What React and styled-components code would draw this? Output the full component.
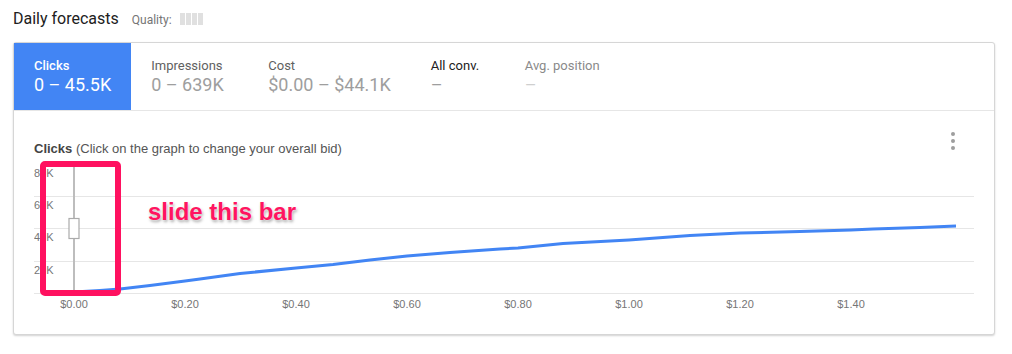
import React from "react";
import styled, { createGlobalStyle } from "styled-components";

const Global = createGlobalStyle`
  html, body { margin: 0; padding: 0; background: #fff; }
  body { font-family: Roboto, "Liberation Sans", Arial, sans-serif; }
`;

const Page = styled.div`
  width: 1012px;
  height: 354px;
  box-sizing: border-box;
  padding: 8px 17px 0 13px;
`;

const Header = styled.div`
  display: flex;
  align-items: baseline;
  height: 22px;
  margin-bottom: 12px;
`;

const Title = styled.h1`
  margin: 0;
  font-size: 16px;
  font-weight: 400;
  line-height: 22px;
  color: #212121;
`;

const QualityLabel = styled.span`
  margin-left: 13px;
  font-size: 12px;
  color: #757575;
`;

const QualityBars = styled.span`
  display: inline-flex;
  gap: 1px;
  margin-left: 8px;
  align-self: center;
`;

const QBar = styled.span`
  width: 5px;
  height: 12px;
  background: #e0e0e0;
`;

const Card = styled.div`
  border: 1px solid #d6d6d6;
  border-radius: 3px;
  box-shadow: 0 1px 2px rgba(0, 0, 0, 0.18);
  background: #fff;
`;

const Tabs = styled.div`
  display: flex;
  height: 67px;
  border-bottom: 1px solid #e6e6e6;
`;

const Tab = styled.div`
  box-sizing: border-box;
  padding: 15px 20px 0 20px;
  min-width: ${(p) => p.$min || 0}px;
  background: ${(p) => (p.$active ? "#4285f4" : "transparent")};
`;

const TabLabel = styled.div`
  font-size: 13px;
  line-height: 16px;
  font-weight: ${(p) => (p.$active ? 500 : 400)};
  color: ${(p) => p.$color};
`;

const TabValue = styled.div`
  font-size: 18px;
  line-height: 22px;
  font-weight: 400;
  color: ${(p) => p.$color};
  white-space: nowrap;
`;

const ChartSection = styled.div`
  position: relative;
  padding: 30px 20px 14px 20px;
`;

const ChartHead = styled.div`
  display: flex;
  justify-content: space-between;
  align-items: flex-start;
`;

const ChartTitle = styled.div`
  font-family: "Liberation Sans", Arial, sans-serif;
  font-size: 13px;
  line-height: 16px;
  color: #555;
  b {
    color: #444;
    font-weight: 700;
  }
`;

const Kebab = styled.div`
  display: flex;
  flex-direction: column;
  gap: 3px;
  margin-top: -9px;
  margin-right: 19px;
`;

const Dot = styled.span`
  width: 4px;
  height: 4px;
  border-radius: 50%;
  background: #9e9e9e;
`;

const ChartSvg = styled.svg`
  display: block;
  margin-top: 3px;
`;

const Highlight = styled.div`
  position: absolute;
  left: 26px;
  top: 50px;
  width: 81px;
  height: 135px;
  box-sizing: border-box;
  border: 6px solid #ff1160;
  border-radius: 5px;
`;

const Note = styled.div`
  position: absolute;
  left: 134px;
  top: 87px;
  font-family: "Liberation Sans", Arial, sans-serif;
  font-weight: 700;
  font-size: 24px;
  line-height: 28px;
  color: #ff1460;
  white-space: nowrap;
  text-shadow: 0 0 2px #fff, 1px 2px 3px rgba(0, 0, 0, 0.35);
`;

const tabs = [
  { label: "Clicks", value: "0 – 45.5K", active: true, lc: "#fff", vc: "#fff", min: 117 },
  { label: "Impressions", value: "0 – 639K", lc: "#616161", vc: "#9e9e9e", min: 117 },
  { label: "Cost", value: "$0.00 – $44.1K", lc: "#616161", vc: "#9e9e9e", min: 161 },
  { label: "All conv.", value: "–", lc: "#212121", vc: "#9e9e9e", min: 94 },
  { label: "Avg. position", value: "–", lc: "#8a8a8a", vc: "#cfcfcf" },
];

const pts = [
  [74, 292], [100, 290.5], [120, 289], [150, 285.5], [185, 281], [200, 279],
  [240, 273.5], [296, 268], [333, 264.5], [370, 260], [407, 256], [450, 252.5],
  [500, 249], [518, 248], [563, 243.5], [629, 240], [690, 235.5], [740, 233],
  [800, 231.5], [851, 230], [873, 229], [920, 227.5], [956, 226],
];

const OX = 34;
const OY = 160;

export default function App() {
  const grid = [196, 228, 261, 293];
  const yLabels = [
    ["80K", 177],
    ["60K", 209],
    ["40K", 241],
    ["20K", 273.5],
  ];
  const xLabels = ["$0.00", "$0.20", "$0.40", "$0.60", "$0.80", "$1.00", "$1.20", "$1.40"];
  const path = pts.map(([x, y], i) => `${i ? "L" : "M"}${x - OX} ${y - OY}`).join(" ");

  return (
    <>
      <Global />
      <Page>
        <Header>
          <Title>Daily forecasts</Title>
          <QualityLabel>Quality:</QualityLabel>
          <QualityBars>
            <QBar />
            <QBar />
            <QBar />
            <QBar />
          </QualityBars>
        </Header>
        <Card>
          <Tabs>
            {tabs.map((t) => (
              <Tab key={t.label} $active={t.active} $min={t.min}>
                <TabLabel $active={t.active} $color={t.lc}>{t.label}</TabLabel>
                <TabValue $color={t.vc}>{t.value}</TabValue>
              </Tab>
            ))}
          </Tabs>
          <ChartSection>
            <ChartHead>
              <ChartTitle>
                <b>Clicks</b> (Click on the graph to change your overall bid)
              </ChartTitle>
              <Kebab>
                <Dot />
                <Dot />
                <Dot />
              </Kebab>
            </ChartHead>
            <ChartSvg width="940" height="160" viewBox="0 0 940 160">
              {grid.map((y) => (
                <line key={y} x1="0" x2="940" y1={y - OY + 0.5} y2={y - OY + 0.5} stroke="#e6e6e6" strokeWidth="1" />
              ))}
              {yLabels.map(([t, y]) => (
                <text key={t} x="0" y={y - OY} fontFamily="Liberation Sans, Arial, sans-serif" fontSize="11" fill="#757575">
                  {t}
                </text>
              ))}
              {xLabels.map((t, i) => (
                <text
                  key={t}
                  x={74 - OX + 111 * i}
                  y={308 - OY}
                  textAnchor="middle"
                  fontFamily="Liberation Sans, Arial, sans-serif"
                  fontSize="11"
                  fill="#757575"
                >
                  {t}
                </text>
              ))}
              <path d={path} fill="none" stroke="#4285f4" strokeWidth="3" strokeLinejoin="round" />
              <line x1={74 - OX} x2={74 - OX} y1={167 - OY} y2={293 - OY} stroke="#bdbdbd" strokeWidth="2" />
              <rect x={69 - OX} y={218.5 - OY} width="10" height="20" fill="#fff" stroke="#ababab" strokeWidth="1.2" />
            </ChartSvg>
            <Highlight />
            <Note>slide this bar</Note>
          </ChartSection>
        </Card>
      </Page>
    </>
  );
}
